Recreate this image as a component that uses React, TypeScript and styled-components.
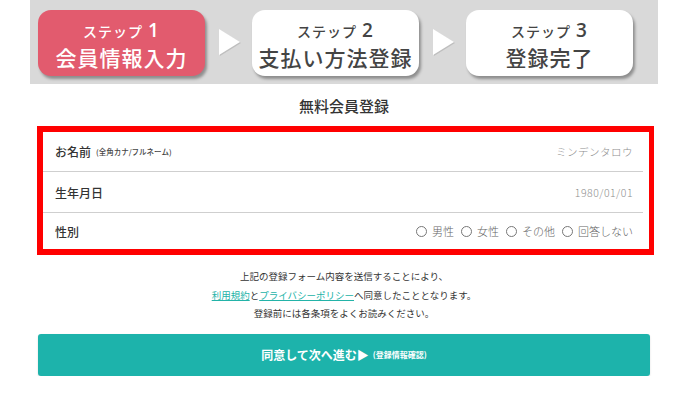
import React from "react";
import styled, { createGlobalStyle } from "styled-components";

const Global = createGlobalStyle`
  html, body { margin: 0; padding: 0; background: #fff; }
  body { font-family: "Noto Sans CJK JP", "Noto Sans", sans-serif; color: #333; }
`;

const Page = styled.div`
  width: 628px;
  margin-left: 30px;
`;

const StepBar = styled.div`
  display: flex;
  align-items: center;
  background: #d9d9d9;
  height: 84px;
  padding: 0 0 0 8px;
  box-sizing: border-box;
`;

const StepBox = styled.div<{ $active?: boolean }>`
  width: 167px;
  height: 66px;
  margin-top: 2px;
  padding-top: 3px;
  border-radius: 13px;
  box-sizing: border-box;
  background: ${(p) => (p.$active ? "#e25b6e" : "#ffffff")};
  color: ${(p) => (p.$active ? "#ffffff" : "#444444")};
  box-shadow: 2px 3px 3px rgba(0, 0, 0, 0.35);
  display: flex;
  flex-direction: column;
  align-items: center;
  justify-content: center;
`;

const StepLabel = styled.div`
  font-size: 14px;
  font-weight: 500;
  line-height: 24px;
  height: 24px;
  letter-spacing: 1px;
  white-space: nowrap;
`;

const StepNum = styled.span`
  font-family: "Open Sans", "Noto Sans", sans-serif;
  font-size: 19px;
  font-weight: 600;
  line-height: 20px;
  margin-left: 5px;
`;

const StepTitle = styled.div`
  font-size: 21px;
  font-weight: 500;
  line-height: 26px;
  height: 26px;
  margin-top: 1px;
  letter-spacing: 1px;
`;

const ArrowSlot = styled.div`
  width: 47px;
  display: flex;
  justify-content: center;
  align-items: center;
`;

const Title = styled.h1`
  margin: 12px 0 0;
  text-align: center;
  font-size: 15px;
  font-weight: 500;
  color: #333;
  line-height: 20px;
`;

const Form = styled.div`
  margin: 10px 4px 0 7px;
  border-style: solid;
  border-color: #ff0000;
  border-width: 6px 5px 6px 6px;
  background: #fff;
`;

const Row = styled.div<{ $h: number; $last?: boolean }>`
  height: ${(p) => p.$h}px;
  display: flex;
  align-items: center;
  justify-content: space-between;
  padding: 0 10px 0 12px;
  margin-right: 6px;
  border-bottom: ${(p) => (p.$last ? "none" : "1px solid #cfcfcf")};
`;

const Label = styled.div`
  font-size: 12px;
  font-weight: 500;
  color: #333;
  display: flex;
  align-items: center;
`;

const SubLabel = styled.span`
  font-size: 7.5px;
  margin-left: 5px;
  color: #444;
`;

const Value = styled.div`
  font-size: 10.5px;
  font-weight: 300;
  color: #8e8e8e;
  letter-spacing: 0.5px;
`;

const Radios = styled.div`
  display: flex;
  gap: 7px;
  font-size: 11px;
  font-weight: 300;
  color: #666;
`;

const Radio = styled.span`
  display: flex;
  align-items: center;
  gap: 5px;
  &::before {
    content: "";
    width: 9px;
    height: 9px;
    border: 1px solid #777;
    border-radius: 50%;
  }
`;

const Notice = styled.div`
  margin-top: 12px;
  text-align: center;
  font-size: 9.5px;
  line-height: 18.5px;
  color: #333;
`;

const Link = styled.a`
  color: #23b3a8;
  text-decoration: underline;
`;

const Button = styled.button`
  display: flex;
  width: 612px;
  height: 42px;
  margin: 11px 0 0 8px;
  border: none;
  border-radius: 3px;
  background: #1db3ab;
  color: #fff;
  font-family: inherit;
  font-size: 12px;
  font-weight: 700;
  align-items: center;
  justify-content: center;
  box-shadow: 0 1px 2px rgba(0, 0, 0, 0.15);
`;

const ButtonSub = styled.span`
  font-size: 8px;
  font-weight: 700;
  margin-left: 4px;
`;

const Arrow = () => (
  <ArrowSlot>
    <svg width="24" height="30" viewBox="0 0 24 30">
      <polygon points="2,2 23,15 2,28" fill="rgba(0,0,0,0.12)" transform="translate(1,1)" />
      <polygon points="2,2 23,15 2,28" fill="#ffffff" />
    </svg>
  </ArrowSlot>
);

const Step = ({ n, title, active }: { n: number; title: string; active?: boolean }) => (
  <StepBox $active={active}>
    <StepLabel>
      ステップ<StepNum>{n}</StepNum>
    </StepLabel>
    <StepTitle>{title}</StepTitle>
  </StepBox>
);

export default function App() {
  return (
    <Page>
      <Global />
      <StepBar>
        <Step n={1} title="会員情報入力" active />
        <Arrow />
        <Step n={2} title="支払い方法登録" />
        <Arrow />
        <Step n={3} title="登録完了" />
      </StepBar>
      <Title>無料会員登録</Title>
      <Form>
        <Row $h={39}>
          <Label>
            お名前<SubLabel>(全角カナ/フルネーム)</SubLabel>
          </Label>
          <Value>ミンデンタロウ</Value>
        </Row>
        <Row $h={40}>
          <Label>生年月日</Label>
          <Value>1980/01/01</Value>
        </Row>
        <Row $h={36} $last>
          <Label>性別</Label>
          <Radios>
            <Radio>男性</Radio>
            <Radio>女性</Radio>
            <Radio>その他</Radio>
            <Radio>回答しない</Radio>
          </Radios>
        </Row>
      </Form>
      <Notice>
        上記の登録フォーム内容を送信することにより、
        <br />
        <Link>利用規約</Link>と<Link>プライバシーポリシー</Link>へ同意したこととなります。
        <br />
        登録前には各条項をよくお読みください。
      </Notice>
      <Button>
        同意して次へ進む▶<ButtonSub>(登録情報確認)</ButtonSub>
      </Button>
    </Page>
  );
}
